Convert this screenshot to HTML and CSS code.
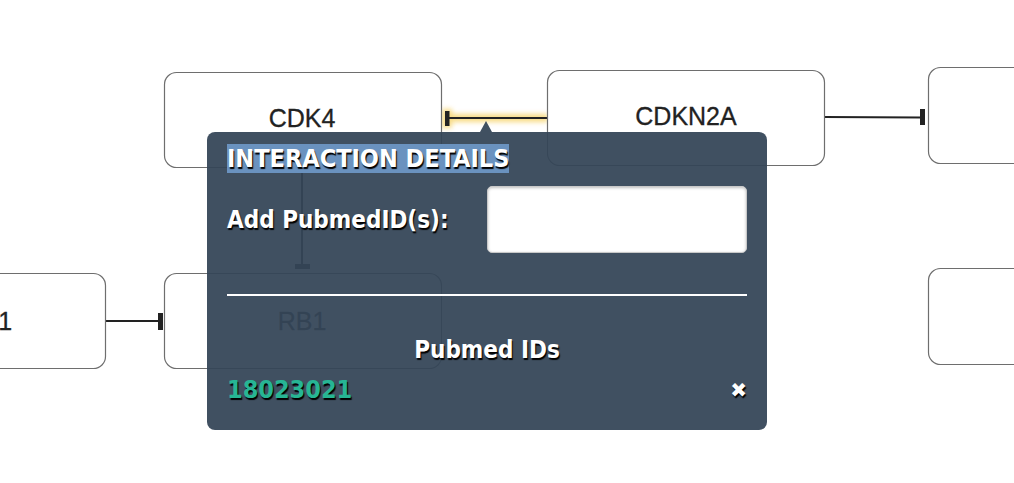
FILE: index.html
```html
<!DOCTYPE html>
<html>
<head>
<meta charset="utf-8">
<link rel="stylesheet" href="styles.css">
</head>
<body>
<div class="canvas">
  <svg class="graph" width="1014" height="483" viewBox="0 0 1014 483" xmlns="http://www.w3.org/2000/svg">
    <defs>
      <filter id="glow" filterUnits="userSpaceOnUse" x="420" y="90" width="160" height="60">
        <feGaussianBlur stdDeviation="2.5"/>
      </filter>
    </defs>
    <!-- edges -->
    <g filter="url(#glow)" opacity="0.75">
      <rect x="447" y="114" width="101" height="8" fill="#f5cf5c"/>
      <rect x="442" y="109" width="10" height="19" fill="#f5cf5c"/>
    </g>
    <line x1="449" y1="118" x2="548" y2="118" stroke="#222" stroke-width="2"/>
    <rect x="445" y="111" width="4.5" height="15" fill="#222"/>

    <line x1="824" y1="117" x2="921" y2="117.5" stroke="#222" stroke-width="2"/>
    <rect x="920" y="109" width="5" height="16" fill="#222"/>

    <line x1="106" y1="321" x2="159" y2="321" stroke="#222" stroke-width="2"/>
    <rect x="158" y="313" width="5" height="17" fill="#222"/>

    <line x1="302" y1="168" x2="302" y2="267" stroke="#222" stroke-width="2"/>
    <rect x="295" y="264" width="15" height="5" fill="#222"/>

    <!-- nodes -->
    <rect x="164.5" y="72.5" width="277" height="95" rx="12" fill="#fff" stroke="#6e6e6e" stroke-width="1.2"/>
    <text x="302" y="127" class="lbl" text-anchor="middle">CDK4</text>

    <rect x="547.5" y="70.5" width="277" height="95" rx="12" fill="#fff" stroke="#6e6e6e" stroke-width="1.2"/>
    <text x="686" y="125" class="lbl" text-anchor="middle">CDKN2A</text>

    <rect x="928.5" y="67.5" width="277" height="96" rx="12" fill="#fff" stroke="#6e6e6e" stroke-width="1.2"/>
    <rect x="928.5" y="268.5" width="277" height="96" rx="12" fill="#fff" stroke="#6e6e6e" stroke-width="1.2"/>

    <rect x="-171.5" y="273.5" width="277" height="95" rx="12" fill="#fff" stroke="#6e6e6e" stroke-width="1.2"/>
    <text x="-31" y="330" class="lbl" text-anchor="middle">CCND1</text>

    <rect x="164.5" y="273.5" width="277" height="95" rx="12" fill="#fff" stroke="#6e6e6e" stroke-width="1.2"/>
    <text x="302" y="330" class="lbl" text-anchor="middle">RB1</text>
  </svg>

  <div class="tooltip">
    <div class="arrow"></div>
    <div class="title"><span class="sel">INTERACTION DETAILS</span></div>
    <div class="add-row">
      <label class="add-label">Add PubmedID(s):</label>
      <input class="add-input" type="text">
    </div>
    <div class="rule"></div>
    <div class="ids-head">Pubmed IDs</div>
    <div class="id-row">
      <span class="pmid">18023021</span>
      <span class="remove">✖</span>
    </div>
  </div>
</div>
</body>
</html>
```

FILE: styles.css
```css
html, body {
  margin: 0;
  padding: 0;
  background: #fff;
  overflow: hidden;
}

.canvas {
  position: relative;
  width: 1014px;
  height: 483px;
}

.graph {
  position: absolute;
  left: 0;
  top: 0;
}

.lbl {
  font-family: "Liberation Sans", Arial, sans-serif;
  font-size: 25px;
  fill: #222;
  stroke: #222;
  stroke-width: 0.3px;
}

.tooltip {
  position: absolute;
  left: 207px;
  top: 132px;
  width: 560px;
  height: 298px;
  box-sizing: border-box;
  padding: 13px 20px 0 20px;
  background: rgba(52, 69, 87, 0.94);
  border-radius: 8px;
  display: flex;
  flex-direction: column;
  font-family: "DejaVu Sans Condensed", "DejaVu Sans", sans-serif;
  font-weight: bold;
  color: #fff;
  text-shadow: 1px 2px 1px #000;
}

.arrow {
  position: absolute;
  left: 273px;
  top: -11px;
  width: 0;
  height: 0;
  border-left: 6px solid transparent;
  border-right: 6px solid transparent;
  border-bottom: 11px solid rgba(52, 69, 87, 0.94);
}

.title {
  font-size: 25px;
  line-height: 28px;
  height: 28px;
}

.sel {
  background: #6a92bf;
}

.add-row {
  display: flex;
  align-items: center;
  justify-content: space-between;
  margin-top: 13px;
}

.add-label {
  font-size: 24px;
}

.add-input {
  width: 260px;
  height: 67px;
  box-sizing: border-box;
  border: 1px solid #c8c8c8;
  border-radius: 5px;
  background: #fff;
  box-shadow: inset 0 1px 3px rgba(0, 0, 0, 0.25);
  margin: 0;
  padding: 0 8px;
}

.rule {
  height: 2px;
  background: #fff;
  margin-top: 41px;
}

.ids-head {
  text-align: center;
  font-size: 24px;
  line-height: 28px;
  margin-top: 40px;
}

.id-row {
  display: flex;
  justify-content: space-between;
  align-items: center;
  margin-top: 12px;
}

.pmid {
  color: #27b594;
  font-size: 25px;
  line-height: 28px;
}

.remove {
  font-size: 20px;
  line-height: 28px;
  font-family: "DejaVu Sans", sans-serif;
}
```
